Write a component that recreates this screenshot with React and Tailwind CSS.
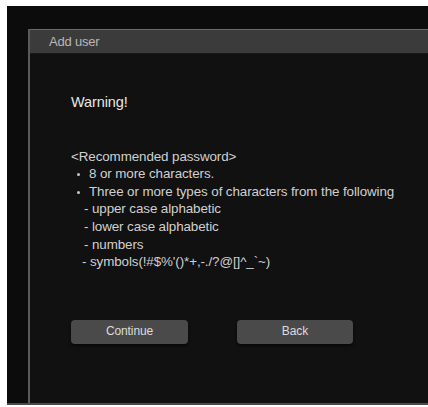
export default function App() {
  return (
    <div className="w-[428px] h-[407px] bg-white pt-[6px] pl-[7px] overflow-hidden" style={{ fontFamily: '"Liberation Sans", Arial, sans-serif' }}>
      <div className="h-[399px] bg-[#0c0c0c] pt-[23px] pl-[21px] border-b-2 border-[#4a4a4a]">
        <div className="h-[374px] bg-[#111111] border-l-2 border-[#5a5a5a] flex flex-col">
          {/* Header */}
          <div className="h-[25px] bg-[#3b3b3b] border-t border-[#6a6a6a] border-b border-b-[#1a1a1a] flex items-center pl-[19px]">
            <span className="text-[13px] text-[#b8b8b8] tracking-[-0.2px]">Add user</span>
          </div>

          {/* Body */}
          <div className="pl-[41px] pt-[40px] text-[13.4px] text-[#d0d0d0] leading-[17.6px] tracking-[-0.1px]">
            <p className="text-[14.5px] text-[#e6e6e6]">Warning!</p>
            <div className="mt-[36px]">
              <p>&lt;Recommended password&gt;</p>
              <p className="flex items-center">
                <span className="w-[3px] h-[3px] rounded-full bg-[#c8c8c8] ml-[6px] mr-[9px] mt-[1px]" />
                8 or more characters.
              </p>
              <p className="flex items-center">
                <span className="w-[3px] h-[3px] rounded-full bg-[#c8c8c8] ml-[6px] mr-[9px] mt-[1px]" />
                Three or more types of characters from the following
              </p>
              <p className="pl-[13px]">- upper case alphabetic</p>
              <p className="pl-[13px]">- lower case alphabetic</p>
              <p className="pl-[13px]">- numbers</p>
              <p className="pl-[11px]">- symbols(!#$%'()*+,-./?@[]^_`~)</p>
            </div>

            <div className="flex gap-[49px] mt-[49px]">
              <button className="w-[117px] h-[24px] rounded-[4px] bg-[#4a4a4a] text-[#dcdcdc] text-[12px] shadow-[0_2px_3px_rgba(0,0,0,0.6)]">Continue</button>
              <button className="w-[116px] h-[24px] rounded-[4px] bg-[#4a4a4a] text-[#dcdcdc] text-[12px] shadow-[0_2px_3px_rgba(0,0,0,0.6)]">Back</button>
            </div>
          </div>
        </div>
      </div>
    </div>
  );
}
